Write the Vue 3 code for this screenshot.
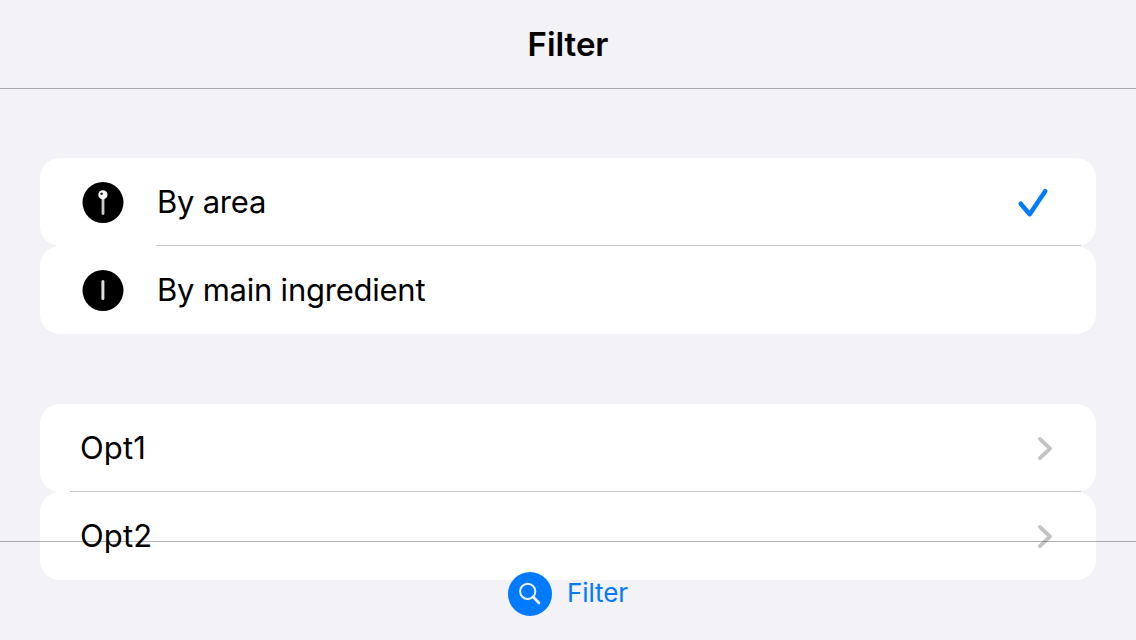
<script setup>
const modes = [
  { label: 'By area', icon: 'pin', checked: true },
  { label: 'By main ingredient', icon: 'bar', checked: false }
]
const options = ['Opt1', 'Opt2']
</script>

<template>
  <div class="screen">
    <header class="navbar"><h1>Filter</h1></header>
    <main class="content">
      <section class="group">
        <div v-for="mode in modes" :key="mode.label" class="row icon-row">
          <svg class="mode-icon" width="42" height="42" viewBox="0 0 42 42">
            <circle cx="21" cy="21.5" r="20.5" fill="#000" />
            <template v-if="mode.icon === 'pin'">
              <path d="M21 17v15.6" stroke="#ccc" stroke-width="2.8" stroke-linecap="round" />
              <circle cx="20.9" cy="13.8" r="4.6" fill="#fff" />
              <circle cx="19.6" cy="12.8" r="1.3" fill="#222" />
            </template>
            <path v-else d="M20.9 12.6v17" stroke="#ddd" stroke-width="3" stroke-linecap="round" />
          </svg>
          <span class="label">{{ mode.label }}</span>
          <svg v-if="mode.checked" class="check" width="32" height="32" viewBox="0 0 32 32">
            <path d="M3.7 17.7L12.7 28.2L28.2 5.2" />
          </svg>
        </div>
      </section>
      <section class="group">
        <div v-for="option in options" :key="option" class="row">
          <span class="label option">{{ option }}</span>
          <svg class="chevron" width="18" height="28" viewBox="0 0 18 28">
            <path d="M2.9 4.9L13 14.5L2.9 24.1" />
          </svg>
        </div>
      </section>
    </main>
    <footer class="tabbar">
      <svg width="44" height="44" viewBox="0 0 44 44">
        <circle cx="22" cy="22" r="22" fill="#007aff" />
        <circle cx="19.7" cy="19.4" r="7.6" fill="none" stroke="#f2f2f7" stroke-width="2" />
        <path d="M25.2 25l5.8 6" stroke="#f2f2f7" stroke-width="2.7" stroke-linecap="round" />
      </svg>
      <span class="tab-label">Filter</span>
    </footer>
  </div>
</template>

<style>
body { margin: 0; }
</style>

<style scoped>
.screen {
  position: relative;
  box-sizing: border-box;
  width: 1136px;
  height: 640px;
  overflow: hidden;
  background: #f2f2f7;
  color: #000;
  font-family: Inter, "Liberation Sans", sans-serif;
}
.navbar {
  box-sizing: border-box;
  height: 89px;
  display: flex;
  align-items: center;
  justify-content: center;
  border-bottom: 1px solid #a7a7aa;
}
h1 {
  margin: 0;
  font-size: 33px;
  line-height: 40px;
  font-weight: 600;
  letter-spacing: -0.05px;
}
.content {
  display: flex;
  flex-direction: column;
  gap: 70px;
  padding: 69px 40px 0;
}
.row {
  position: relative;
  box-sizing: border-box;
  height: 88px;
  display: flex;
  align-items: center;
  padding: 0 41px;
  background: #fff;
  border-radius: 20px;
}
.row:not(:last-child)::after {
  content: "";
  position: absolute;
  left: 30px;
  right: 15px;
  bottom: 0;
  height: 1px;
  background: #c6c6c8;
}
.icon-row:not(:last-child)::after { left: 116px; }
.mode-icon {
  margin-left: 1px;
  margin-right: 33px;
}
.label {
  font-size: 31px;
  line-height: 40px;
  letter-spacing: -0.24px;
}
.label.option {
  margin-left: -1px;
  letter-spacing: 0.15px;
}
.check { margin-left: auto; margin-right: 6px; }
.check path {
  fill: none;
  stroke: #007aff;
  stroke-width: 4.5;
  stroke-linecap: round;
  stroke-linejoin: round;
}
.chevron { margin-left: auto; }
.chevron path {
  fill: none;
  stroke: #c4c4c6;
  stroke-width: 3.8;
  stroke-linecap: round;
  stroke-linejoin: round;
}
.tabbar {
  position: absolute;
  left: 0;
  right: 0;
  bottom: 0;
  box-sizing: border-box;
  height: 99px;
  display: flex;
  justify-content: center;
  align-items: flex-start;
  gap: 15px;
  padding-top: 30px;
  border-top: 1px solid rgba(0, 0, 0, 0.3);
  color: #007aff;
}
.tab-label {
  font-size: 26px;
  line-height: 42px;
  letter-spacing: -0.1px;
}
</style>
